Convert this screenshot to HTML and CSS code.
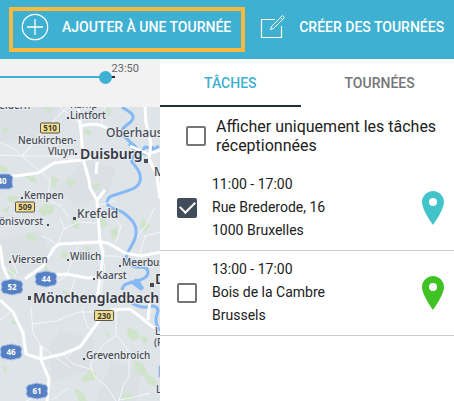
FILE: index.html
```html
<!DOCTYPE html>
<html lang="fr">
<head>
    <meta charset="UTF-8">
    <meta name="viewport" content="width=device-width, initial-scale=1.0">
    <title>Tournées</title>
    <link rel="stylesheet" href="styles.css">
</head>
<body>
    <header class="toolbar">
        <button type="button" class="tool-btn highlighted">
            <svg width="28" height="28" viewBox="0 0 28 28" fill="none" stroke="currentColor">
                <circle cx="14" cy="14" r="12.7" stroke-width="1.2"/>
                <path d="M14 6v16M6 14h16" stroke-width="1.3"/>
            </svg>
            Ajouter à une tournée
        </button>
        <button type="button" class="tool-btn">
            <svg width="26" height="26" viewBox="0 0 26 26" fill="none" stroke="currentColor">
                <path d="M15 5.500H1.500V23.500H21.500V12" stroke-width="1.200"/>
                <path d="M10.500 15.500l1-3L22.500 1.500l2 2L13.500 14.500zM20.500 3.500l2 2" stroke-width="1"/>
            </svg>
            Créer des tournées
        </button>
    </header>

    <main class="content">
        <section class="map-panel">
            <div class="timeline">
                <label for="time">23:50</label>
                <input type="range" id="time" min="0" max="100" value="97">
            </div>
            <svg class="map" viewBox="0 107 160 294" preserveAspectRatio="xMinYMin slice">
                <rect class="land" x="0" y="107" width="160" height="294"/>

                <g class="shade">
                    <path d="M0 107h60l-18 30-42 8zM86 160l30 8-8 26-34 12-16-20zM0 240l40-10 14 30-34 16-20-6zM60 330l34 10-6 30-34 12-8-30zM112 360l30 10-6 31h-40z"/>
                </g>

                <g class="wood">
                    <path d="M43 107h9l-3 6zM2 129l5-2 2 4-6 3zM86 128l7 4-4 4-6-3zM105 108l7 2-3 6-5-2zM0 164l8 5-2 4-6-2zM26 172l8 4 3 8-7-3-5-4zM52 176l8 4-5 3 3 7-8-5zM66 181l8-2 2 6-8 2zM10 195l9 2-6 6-7-3zM92 186l8-5-2 10z"/>
                    <path d="M45 203l10 4-3 7-9 2-5-5zM2 210l8-4-3 7zM72 218l8 4-2 8-7-4zM28 232l10 4-4 6-8-3zM98 216l8 4 2 6-7 1zM142 218l8 7-4 8-6-7zM110 230l7-3 2 8-6 5zM62 250l7 3-3 6-6-3zM150 258l6 3-3 6zM84 246l7 2-5 5zM10 268l7 4-4 4-6-3zM44 266l6 4-6 5z"/>
                    <path d="M81 380l9-12 6 5-1 7-11 2zM134 360l9 4 5 10 7 5 4 9-9-3-7-9-8-5zM128 327l8 3 5 7-8 4-6-6zM74 388l9 4 4 9h-8zM120 395l9-3 5 5-9 4zM14 318l7 2-4 5-6-2zM105 330l5 4-3 4zM62 290l8 3-5 4zM142 335l6 4-2 6-5-3zM2 366l6 2-3 5z"/>
                </g>

                <g class="water">
                    <path d="M122 107c5 4 12 6 11 11s-7 6-11 12c-2 5 4 7 7 11s9 5 8 10-7 6-5 11c4 5 10 11 8 19s-11 9-19 12-13 2-14 9c1 8 11 6 18 12s12 10 11 20-9 16-10 24c-1 6 5 8 10 9s12-1 12 5-6 7-11 9-14 1-15 9M124 285l8-3 9 7-6-10M138 281l5 8"/>
                    <path d="M129 144l9 9 9 1 12-8M141 153l4-6 8 2M150 153l3-7"/>
                    <path d="M132 303c5 3 9 5 15 4 6-2 11-1 11 4-3 8-3 13 2 20"/>
                </g>

                <g class="road minor">
                    <path d="M68 107l-22 21-24 27M0 142l14 7 8 7h30l18 2M22 156l19 16 9 8-3 20M22 156l20-20M60 107l18 15M105 107l-4 18M70 158l14-4M0 155l22 1"/>
                    <path d="M48 200l13 6 8 12M58 242l6-13 14-7 18 1M58 245l-17-10M65 230l-5-12M0 263l16 13M12 260l6 14M52 280l-5 18-8 2M78 246l-12 30-12 8M100 244l5 24-5 30M96 256h20l10 3M116 242l5-16-8-9M160 232l-15 4-6 20M155 207l-9 18-9 12M75 278l-7 22M95 206l20-5"/>
                    <path d="M31 307l2 26 8 13 29 22M32 324l24-3 22-9h22M82 308l5 18 6 6M116 310v26l-12 8-14 20 4 12 13 11 11 17 5-18 6-10V352l-12-17M63 354l10 10 20 6M78 345l-10 12M118 400l12-2 20-5M0 320l12-10M52 400l16-12M41 395l-15 6"/>
                </g>

                <g class="road major">
                    <path d="M78 107l3 24 2 28 6 21 1 8 7 12 3 43 3 9-2 20-4 28M80 126c8-2 20-3 28 3M0 178l38-5 16-10 26-3 12-2M145 107l1 16 5 20-2 16 8 16 3 24M130 146l18 8 12-4M97 200l8-10M0 245l3 22 7 15M25 279l18-13 11-18 5-4 40-2 9 1 17 10 16 3 20-4 5-8M46 276l20-2 22 4 30-3M97 162l-1 12"/>
                    <path d="M0 300l13 12 10 21 3 21 15 5 22-5 17-7 18-25 14-12 18-1 13 10 7 6 5 3M41 346v14l8 19-2 22M150 300l-2 20"/>
                </g>

                <g class="shield">
                    <rect x="40.500" y="123" width="19" height="10" rx="1"/>
                    <rect x="15.500" y="202" width="19" height="10" rx="1"/>
                    <rect x="94.500" y="310.500" width="19" height="10" rx="1"/>
                    <text x="50" y="131">510</text>
                    <text x="25" y="210">509</text>
                    <text x="104" y="319">230</text>
                </g>

                <g class="autobahn">
                    <path d="M-8 174h17l4 3-1 5 1 5-4 2H-8z"/>
                    <path id="a" d="M37 273l9-2 9 2 2 3-1 3 1 3-2 3-9 2-9-2-2-3 1-3-1-3z"/>
                    <use href="#a" x="-34" y="8"/>
                    <use href="#a" x="-35" y="73"/>
                    <use href="#a" x="-9" y="112"/>
                    <path d="M160 366h-1v11h1z"/>
                    <text x="2" y="184">40</text>
                    <text x="46" y="282">44</text>
                    <text x="12" y="290">52</text>
                    <text x="11" y="355">46</text>
                    <text x="37" y="394">61</text>
                </g>

                <g class="towns">
                    <text x="-8" y="109">Geldern</text>
                    <text x="70" y="108">Kamp-</text>
                    <text x="70" y="119">Lintfort</text>
                    <text x="18" y="144">Neukirchen-</text>
                    <text x="48" y="155">Vluyn</text>
                    <text x="24" y="199">Kempen</text>
                    <text x="-6" y="225">Tönisvorst</text>
                    <text x="12" y="263">Viersen</text>
                    <text x="70" y="260">Willich</text>
                    <text x="122" y="266">Meerbusch</text>
                    <text x="96" y="279">Kaarst</text>
                    <text x="86" y="359">Grevenbroich</text>
                    <text x="155" y="335">Le</text>
                    <text x="154" y="346">(Rh</text>
                    <text x="156" y="393">L</text>
                </g>
                <g class="towns medium">
                    <text x="106" y="137">Oberhausen</text>
                    <text x="77" y="218">Krefeld</text>
                    <text x="154" y="176">M</text>
                </g>
                <g class="towns large">
                    <text x="80" y="159">Duisburg</text>
                    <text x="33" y="303">Mönchengladbach</text>
                    <text x="155" y="284">D</text>
                </g>

                <g class="dots">
                    <path d="M67 117h2v2h-2zM75 153h2v2h-2zM21 197h2v2h-2zM47 224h2v2h-2zM9 261h2v2H9zM67 259h2v2h-2zM119 265h2v2h-2zM93 278h2v2h-2zM83 358h2v2h-2z"/>
                    <path d="M73 217h3v3h-3zM144 159h4v4h-4zM28 296h3v4h-3zM150 283h4v4h-4z"/>
                </g>
            </svg>
        </section>

        <section class="task-panel">
            <nav class="tabs">
                <button type="button" class="tab active">Tâches</button>
                <button type="button" class="tab">Tournées</button>
            </nav>

            <div class="filter">
                <input type="checkbox" id="received">
                <label for="received">Afficher uniquement les tâches réceptionnées</label>
            </div>

            <ul class="task-list">
                <li class="task">
                    <input type="checkbox" id="task1" checked>
                    <label for="task1">11:00 - 17:00<br>Rue Brederode, 16<br>1000 Bruxelles</label>
                    <svg class="pin blue" width="22" height="34" viewBox="0 0 22 34">
                        <path fill-rule="evenodd" d="M11 0C5 0 0 5 0 11c0 8 11 23 11 23s11-15 11-23C22 5 17 0 11 0zm0 7a4 4 0 1 1 0 8 4 4 0 0 1 0-8z"/>
                    </svg>
                </li>
                <li class="task">
                    <input type="checkbox" id="task2">
                    <label for="task2">13:00 - 17:00<br>Bois de la Cambre<br>Brussels</label>
                    <svg class="pin green" width="22" height="34" viewBox="0 0 22 34">
                        <path fill-rule="evenodd" d="M11 0C5 0 0 5 0 11c0 8 11 23 11 23s11-15 11-23C22 5 17 0 11 0zm0 7a4 4 0 1 1 0 8 4 4 0 0 1 0-8z"/>
                    </svg>
                </li>
            </ul>
        </section>
    </main>
</body>
</html>
```
FILE: styles.css
```css
* {
    margin: 0;
    padding: 0;
    box-sizing: border-box;
}

body {
    font-family: Roboto, 'Liberation Sans', sans-serif;
    color: #212121;
    background: white;
    min-height: 100vh;
    display: flex;
    flex-direction: column;
    overflow: hidden;
}

button {
    font-family: inherit;
    font-size: 14px;
    font-weight: 500;
    text-transform: uppercase;
    white-space: nowrap;
    background: none;
    border: none;
    cursor: pointer;
}

/* Toolbar */
.toolbar {
    display: flex;
    align-items: flex-start;
    gap: 15px;
    height: 59px;
    padding: 7px 8px 0 9px;
    background: #3eb0d1;
}

.tool-btn {
    display: flex;
    align-items: center;
    gap: 13px;
    height: 40px;
    color: white;
}

.tool-btn svg {
    flex-shrink: 0;
}

.tool-btn.highlighted {
    height: 45px;
    padding: 0 10px 5px 8px;
    border: 4px solid #fbb93d;
}

.content {
    flex: 1;
    display: flex;
}

/* Map */
.map-panel {
    flex: 0 0 160px;
    display: flex;
    flex-direction: column;
}

.timeline {
    height: 48px;
    padding-top: 4px;
    background: #f2f2f2;
}

.timeline label {
    display: block;
    padding-right: 21px;
    font-size: 11px;
    line-height: 12px;
    text-align: right;
    color: #666;
}

.timeline input {
    display: block;
    appearance: none;
    width: 115px;
    height: 2px;
    margin-top: 1px;
    background: linear-gradient(to right, #3eb0d1 94%, #212d3b 94%);
}

.timeline input::-webkit-slider-thumb {
    appearance: none;
    width: 13px;
    height: 13px;
    border-radius: 50%;
    background: #3eb0d1;
}

.map {
    flex: 1;
    display: block;
    width: 100%;
    font-family: 'Noto Sans', 'Open Sans', sans-serif;
}

.land { fill: #dfe4e8; }
.shade { fill: #d9dee2; opacity: 0.6; }
.wood { fill: #cde5c5; opacity: 0.8; }

.water {
    fill: none;
    stroke: #84b9f6;
    stroke-width: 3;
    stroke-linejoin: round;
}

.road {
    fill: none;
    stroke: #f5f7f9;
    stroke-linejoin: round;
}

.road.minor { stroke-width: 1; }
.road.major { stroke: white; stroke-width: 3; }

.shield rect {
    fill: #f4df8c;
    stroke: #55534b;
}

.shield text,
.autobahn text {
    font-size: 8px;
    font-weight: 700;
    text-anchor: middle;
}

.shield text { fill: #3d3d3d; }

.autobahn path {
    fill: #5580c4;
    stroke: #a9c1e8;
}

.autobahn text { fill: white; }

.towns text {
    font-size: 10px;
    font-weight: 500;
    fill: #474a55;
    stroke: #e8ecef;
    stroke-width: 2px;
    paint-order: stroke;
}

.towns.medium text { font-size: 12px; }
.towns.large text { font-size: 14px; font-weight: 600; fill: #363845; }
.dots { fill: #474a55; }

/* Tasks */
.task-panel {
    flex: 1;
    min-width: 0;
}

.tabs {
    display: flex;
    height: 48px;
    overflow: hidden;
}

.tab {
    flex-shrink: 0;
    padding: 2px 44px 0;
    color: #757575;
    border-bottom: 2px solid transparent;
}

.tab.active {
    color: #3eb0d1;
    border-bottom-color: #212d3b;
}

input[type="checkbox"] {
    appearance: none;
    flex-shrink: 0;
    width: 20px;
    height: 20px;
    border: 2px solid #757575;
    border-radius: 2px;
}

input[type="checkbox"]:checked {
    display: grid;
    place-items: center;
    background: #414c5a;
    border-color: #414c5a;
}

input[type="checkbox"]:checked::before {
    content: '';
    width: 13px;
    height: 7px;
    border: solid white;
    border-width: 0 0 2px 2px;
    transform: translateY(-2px) rotate(-45deg);
}

.filter {
    display: flex;
    align-items: center;
    gap: 10px;
    padding: 10px 10px 11px 26px;
    font-size: 16px;
    line-height: 19px;
}

.task-list {
    list-style: none;
}

.task {
    display: flex;
    align-items: center;
    gap: 15px;
    padding: 7px 10px 8px 17px;
    border-bottom: 1px solid #ccc;
}

.task label {
    flex: 1;
    font-size: 14px;
    line-height: 23px;
}

.pin.blue { fill: #43c4cb; }
.pin.green { fill: #41c224; }
```
